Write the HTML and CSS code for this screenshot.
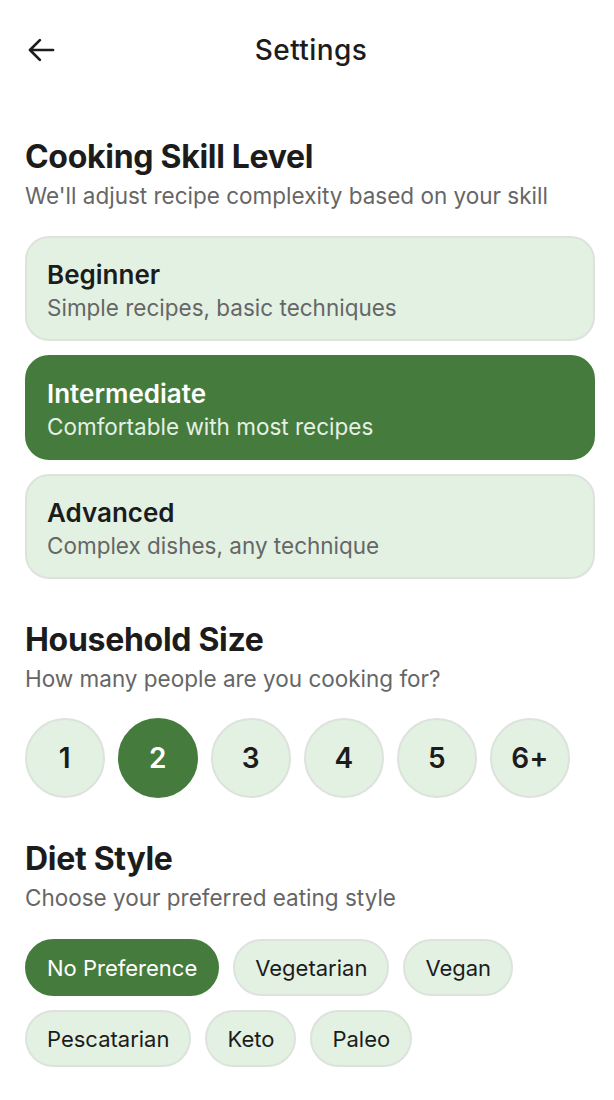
FILE: index.html
```html
<!DOCTYPE html>
<html>
	<head>
		<meta charset="utf-8">
		<title>Settings</title>
		<link rel="stylesheet" href="styles.css">
	</head>
	<body>
		<div class="app">
			<div class="topbar">
				<a class="back">
					<svg width="34" height="34" viewBox="0 0 24 24"><path d="M20.5 12H4.5M11.2 5l-7 7 7 7" fill="none" stroke="#1d1d1d" stroke-width="1.9" stroke-linecap="round" stroke-linejoin="round"/></svg>
				</a>
				<h1 class="title">Settings</h1>
			</div>

			<div class="section">
				<h2>Cooking Skill Level</h2>
				<p class="hint">We'll adjust recipe complexity based on your skill</p>
				<div class="cards">
					<div class="card">
						<div class="card-title">Beginner</div>
						<div class="card-sub">Simple recipes, basic techniques</div>
					</div>
					<div class="card active">
						<div class="card-title">Intermediate</div>
						<div class="card-sub">Comfortable with most recipes</div>
					</div>
					<div class="card">
						<div class="card-title">Advanced</div>
						<div class="card-sub">Complex dishes, any technique</div>
					</div>
				</div>
			</div>

			<div class="section">
				<h2>Household Size</h2>
				<p class="hint">How many people are you cooking for?</p>
				<ul class="sizes">
					<li>1</li>
					<li class="active">2</li>
					<li>3</li>
					<li>4</li>
					<li>5</li>
					<li>6+</li>
				</ul>
			</div>

			<div class="section">
				<h2>Diet Style</h2>
				<p class="hint">Choose your preferred eating style</p>
				<ul class="chips">
					<li class="active">No Preference</li>
					<li>Vegetarian</li>
					<li>Vegan</li>
					<li>Pescatarian</li>
					<li>Keto</li>
					<li>Paleo</li>
				</ul>
			</div>
		</div>
	</body>
</html>
```

FILE: styles.css
```css
* {
	margin: 0;
	padding: 0;
	box-sizing: border-box;
}
body {
	font-family: Inter, "Noto Sans", sans-serif;
	color: #1c1c1c;
	background: #fff;
}
.app {
	padding: 0 19px 0 25px;
}
.topbar {
	height: 100px;
	display: flex;
	align-items: center;
	position: relative;
	justify-content: center;
}
.back {
	position: absolute;
	left: -1px;
	top: 33px;
	width: 34px;
	height: 34px;
}
.title {
	font-size: 28px;
	font-weight: 500;
	letter-spacing: 0.4px;
	padding-left: 2px;
}
.section {
	margin-top: 42px;
}
.topbar + .section {
	margin-top: 38px;
}
h2 {
	font-size: 32px;
	font-weight: 700;
	line-height: 38px;
	letter-spacing: -0.3px;
}
.hint {
	font-size: 22.5px;
	color: #666;
	line-height: 28px;
	margin-top: 6px;
}
.cards {
	margin-top: 26px;
	display: flex;
	flex-direction: column;
	gap: 14px;
}
.card {
	background: #e3f1e3;
	border: 2px solid #dce3dc;
	border-radius: 24px;
	padding: 22px 20px 0;
	height: 105px;
}
.card-title {
	font-size: 26px;
	font-weight: 600;
	line-height: 30px;
}
.card-sub {
	font-size: 22.5px;
	color: #666;
	line-height: 28px;
	margin-top: 4px;
}
.card.active {
	background: #457c3d;
	border-color: #457c3d;
}
.card.active .card-title {
	color: #fff;
}
.card.active .card-sub {
	color: #e6f0e4;
}
.sizes {
	list-style: none;
	display: flex;
	gap: 13px;
	margin-top: 25px;
}
.sizes li {
	width: 80px;
	height: 80px;
	border-radius: 50%;
	background: #e3f1e3;
	border: 2px solid #dce3dc;
	display: flex;
	align-items: center;
	justify-content: center;
	font-size: 28px;
	font-weight: 600;
	letter-spacing: 0.5px;
}
.sizes li.active,
.chips li.active {
	background: #457c3d;
	border-color: #457c3d;
	color: #fff;
}
.chips {
	list-style: none;
	display: flex;
	flex-wrap: wrap;
	gap: 14px;
	margin-top: 27px;
}
.chips li {
	height: 57px;
	padding: 0 20px;
	border-radius: 29px;
	background: #e3f1e3;
	border: 2px solid #dce3dc;
	display: flex;
	align-items: center;
	font-size: 22px;
}
```
